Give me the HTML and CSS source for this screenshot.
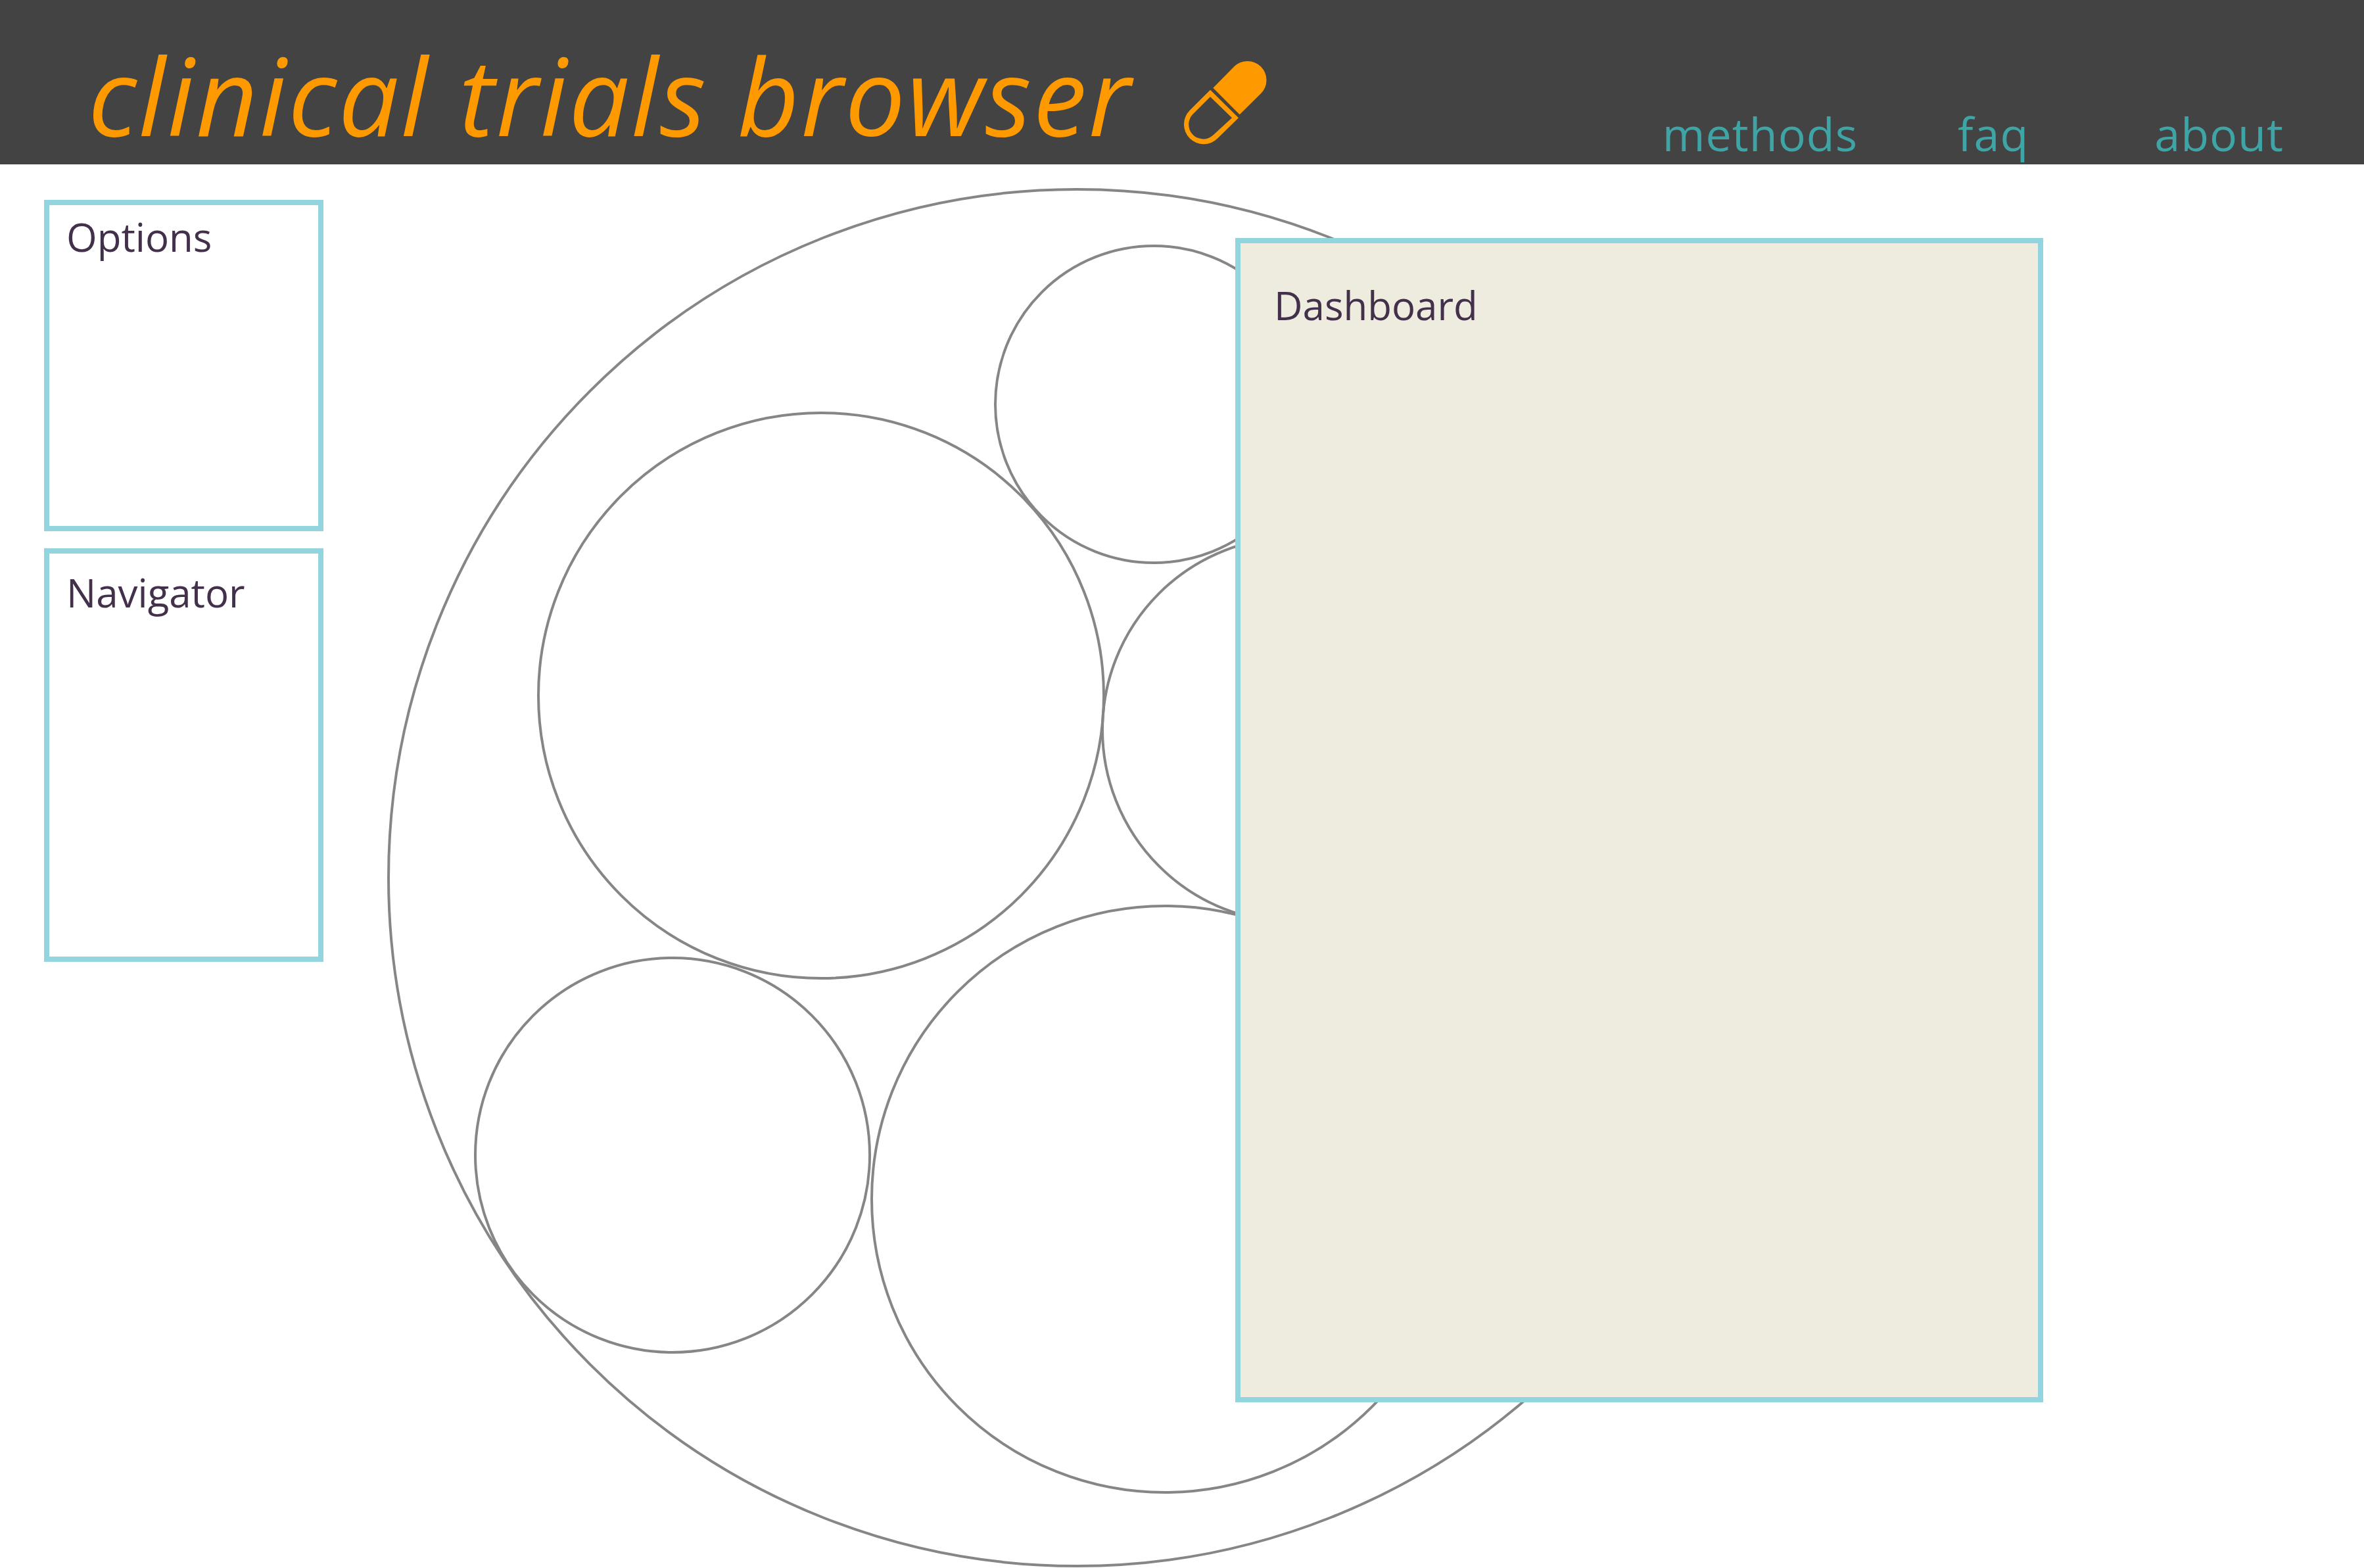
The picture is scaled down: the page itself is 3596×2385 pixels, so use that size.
FILE: index.html
```html
<!DOCTYPE html>
<html lang="en">
<head>
	<meta charset="UTF-8">
	<title>clinical trials browser</title>
	<link rel="stylesheet" href="styles.css">
</head>
<body>
	<header class="topbar">
		<div class="brand">
			<h1 class="brand-name">clinical trials browser</h1>
			<svg class="brand-icon" viewBox="0 0 600 570" aria-hidden="true">
				<path d="M259 221 L355 124 A86 86 0 0 1 477 247 L380 343 Z"/>
				<path fill-rule="evenodd" d="M246 230 L152 324 A90 90 0 0 0 280 451 L375 358 Z M246 262 L168 340 A66 66 0 0 0 260 436 L345 358 Z"/>
			</svg>
		</div>
		<nav class="nav">
			<a class="nav-link nav-methods">methods</a>
			<a class="nav-link nav-faq">faq</a>
			<a class="nav-link">about</a>
		</nav>
	</header>
	<main class="workspace">
		<!-- bubble chart, sits behind the panels -->
		<svg class="bubbles" viewBox="0 0 3596 2135" aria-hidden="true">
			<circle cx="1638" cy="1085" r="1047"/>
			<circle cx="1755" cy="365" r="241"/>
			<circle cx="1249" cy="808" r="430"/>
			<circle cx="1970" cy="860" r="293"/>
			<circle cx="1023" cy="1507" r="300"/>
			<circle cx="1772" cy="1574" r="446"/>
		</svg>
		<aside class="sidebar">
			<section class="panel panel-options">Options</section>
			<section class="panel panel-navigator">Navigator</section>
		</aside>
		<section class="panel dashboard">Dashboard</section>
	</main>
</body>
</html>
```

FILE: styles.css
```css
*{
	margin: 0;
	padding: 0;
	box-sizing: border-box;
}
html,body{
	height: 100%;
	overflow: hidden;
	background: #fff;
}
body{
	font-family: "Open Sans", "Noto Sans", sans-serif;
}
.topbar{
	height: 250px;
	background: #434343;
	display: flex;
	justify-content: space-between;
}
.brand{
	display: flex;
	align-items: flex-start;
	padding-left: 134px;
}
.brand-name{
	font-size: 163px;
	font-weight: 400;
	font-style: italic;
	line-height: 190px;
	margin-top: 49px;
	color: #f90;
	letter-spacing: 2.6px;
	white-space: nowrap;
}
.brand-icon{
	width: 200px;
	height: 190px;
	margin-top: 60px;
	margin-left: 37px;
	fill: #f90;
}
.nav{
	display: flex;
	align-items: flex-start;
	padding-right: 122px;
	padding-top: 156px;
}
.nav-link{
	font-size: 70px;
	line-height: 95px;
	color: #3fa4a6;
	font-weight: 400;
	letter-spacing: 1px;
}
.nav-methods{
	margin-right: 152px;
}
.nav-faq{
	margin-right: 191px;
}
.workspace{
	position: relative;
	height: 2135px;
	padding: 54px 0 0 67px;
}
.bubbles{
	position: absolute;
	left: 0;
	top: 0;
	width: 3596px;
	height: 2135px;
	fill: none;
	stroke: #868686;
	stroke-width: 4;
}
.sidebar{
	position: relative;
	width: 425px;
	display: flex;
	flex-direction: column;
	gap: 26px;
}
.panel{
	position: relative;
	border: 8px solid #93d5de;
	color: #43304a;
	font-size: 60px;
	line-height: 84px;
}
.panel-options{
	height: 504px;
	padding: 6px 0 0 26px;
}
.panel-navigator{
	height: 629px;
	padding: 17px 0 0 26px;
}
.dashboard{
	position: absolute;
	left: 1879px;
	top: 112px;
	width: 1229px;
	height: 1771px;
	background: #eeebdf;
	padding: 52px 0 0 51px;
}
```
